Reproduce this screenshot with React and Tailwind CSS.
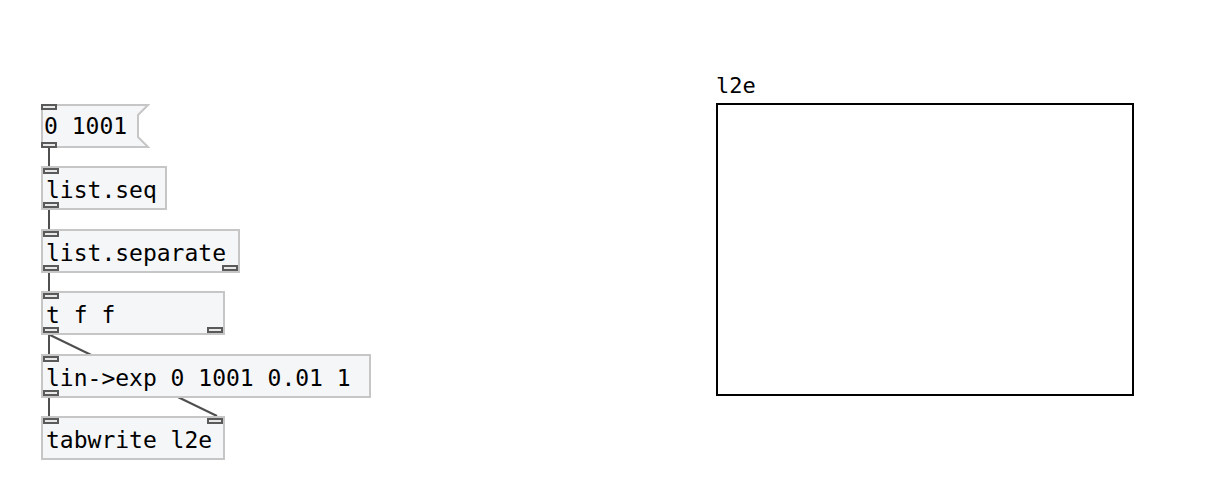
import React from "react";

const font = { fontFamily: '"DejaVu Sans Mono", "Liberation Mono", monospace' };

function Port({ pos }) {
  const cls = {
    tl: "top-0 left-0",
    bl: "bottom-0 left-0",
    tr: "top-0 right-0",
    br: "bottom-0 right-0",
  }[pos];
  return (
    <span
      className={`absolute ${cls} w-[16px] h-[6px] border-2 border-[#5a5a5a] bg-[#e8e8e8] z-10`}
    />
  );
}

function Label({ text }) {
  return (
    <span
      className="absolute left-[3px] top-[8px] text-[23px] leading-[28px] text-black whitespace-pre"
      style={font}
    >
      {text}
    </span>
  );
}

function ObjBox({ w, text, ports }) {
  return (
    <div
      className="relative h-[44px] border-2 border-[#c6c6c6] bg-[#f5f6f8] z-[5]"
      style={{ width: w }}
    >
      <Label text={text} />
      {ports.map((p) => (
        <Port key={p} pos={p} />
      ))}
    </div>
  );
}

function MsgBox({ w, text }) {
  return (
    <div className="relative h-[44px] z-[5]" style={{ width: w + 12 }}>
      <svg className="absolute inset-0" width={w + 12} height={44}>
        <polygon
          points={`1,1 ${w + 10},1 ${w},11 ${w},33 ${w + 10},43 1,43`}
          fill="#f5f6f8"
          stroke="#c6c6c6"
          strokeWidth="2"
        />
      </svg>
      <Label text={text} />
      <Port pos="tl" />
      <Port pos="bl" />
    </div>
  );
}

export default function App() {
  return (
    <div className="relative w-[1217px] h-[494px] bg-white overflow-hidden">
      <svg className="absolute inset-0 z-0" width="1217" height="494">
        <g stroke="#4f4f4f" strokeWidth="2" fill="none">
          <line x1="49" y1="147" x2="49" y2="167" />
          <line x1="49" y1="209" x2="49" y2="229" />
          <line x1="49" y1="271" x2="49" y2="292" />
          <line x1="49" y1="334" x2="49" y2="355" />
          <line x1="49" y1="397" x2="49" y2="417" />
          <line x1="50" y1="335" x2="217" y2="416" />
        </g>
      </svg>

      <div className="relative flex items-start pl-[41px] pt-[70px]">
        <div className="flex flex-col items-start gap-[18.4px] pt-[34px]">
          <MsgBox w={97} text="0 1001" />
          <ObjBox w={126} text="list.seq" ports={["tl", "bl"]} />
          <ObjBox w={199} text="list.separate" ports={["tl", "bl", "br"]} />
          <ObjBox w={184} text="t f f" ports={["tl", "bl", "br"]} />
          <ObjBox w={330} text="lin->exp 0 1001 0.01 1" ports={["tl", "bl"]} />
          <ObjBox w={184} text="tabwrite l2e" ports={["tl", "tr"]} />
        </div>

        <div className="ml-[345px] flex flex-col">
          <span className="h-[33px] pt-[2px] text-[22px] leading-[28px] text-black" style={font}>
            l2e
          </span>
          <div className="w-[418px] h-[293px] border-2 border-black bg-white" />
        </div>
      </div>
    </div>
  );
}
